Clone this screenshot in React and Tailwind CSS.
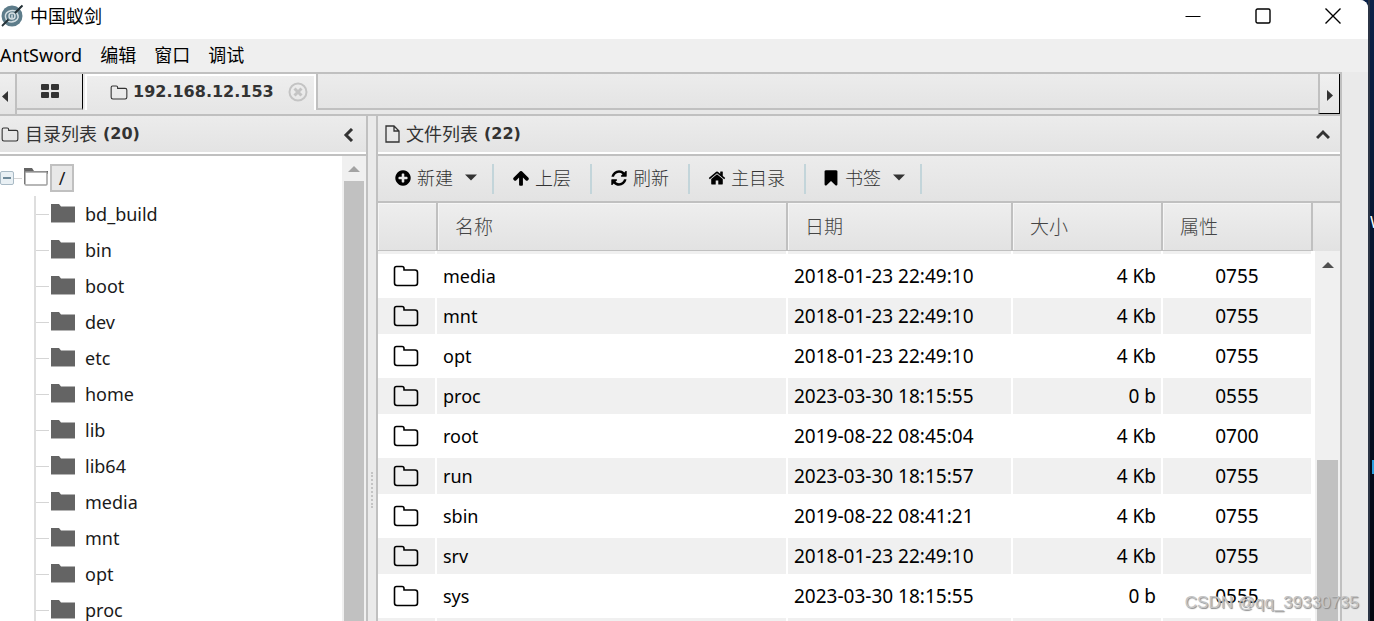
import { useState } from 'react';

const treeFolders = ['bd_build', 'bin', 'boot', 'dev', 'etc', 'home', 'lib', 'lib64', 'media', 'mnt', 'opt', 'proc'];

const files = [
  { name: 'media', date: '2018-01-23 22:49:10', size: '4 Kb', mode: '0755' },
  { name: 'mnt', date: '2018-01-23 22:49:10', size: '4 Kb', mode: '0755' },
  { name: 'opt', date: '2018-01-23 22:49:10', size: '4 Kb', mode: '0755' },
  { name: 'proc', date: '2023-03-30 18:15:55', size: '0 b', mode: '0555' },
  { name: 'root', date: '2019-08-22 08:45:04', size: '4 Kb', mode: '0700' },
  { name: 'run', date: '2023-03-30 18:15:57', size: '4 Kb', mode: '0755' },
  { name: 'sbin', date: '2019-08-22 08:41:21', size: '4 Kb', mode: '0755' },
  { name: 'srv', date: '2018-01-23 22:49:10', size: '4 Kb', mode: '0755' },
  { name: 'sys', date: '2023-03-30 18:15:55', size: '0 b', mode: '0555' },
];

function FolderOutline({ className, strokeWidth = 2 }) {
  return (
    <svg className={className} viewBox="0 0 26 22" fill="none" stroke="currentColor" strokeWidth={strokeWidth}>
      <path d="M1.500 18V3.500Q1.500 1.500 3.500 1.500H9Q11 1.500 11 3.500V5H22Q24.500 5 24.500 7.500V18Q24.500 20.500 22 20.500H4Q1.500 20.500 1.500 18Z" />
    </svg>
  );
}

function FolderSolid() {
  return (
    <svg className="h-5 w-6 shrink-0" viewBox="0 0 24 20">
      <path d="M0 0H8L10 2.500H24V18H0Z" fill="#646464" />
      <path d="M0 18.500H24" stroke="#b4b4b4" />
    </svg>
  );
}

function Glyph({ d }) {
  return (
    <svg className="h-[18px] w-[18px] -mx-px shrink-0" viewBox="0 0 1792 1792" fill="currentColor">
      <path d={d} />
    </svg>
  );
}

function Caret() {
  return (
    <svg className="h-[7px] w-3 ml-[6px]" viewBox="0 0 12 7" fill="#333">
      <path d="M0 0.500H12L6 6.500Z" />
    </svg>
  );
}

const toolbar = [
  {
    label: '新建',
    menu: true,
    d: 'M1344 960v-128q0-26-19-45t-45-19h-256v-256q0-26-19-45t-45-19h-128q-26 0-45 19t-19 45v256h-256q-26 0-45 19t-19 45v128q0 26 19 45t45 19h256v256q0 26 19 45t45 19h128q26 0 45-19t19-45v-256h256q26 0 45-19t19-45zm320-64q0 209-103 385.500t-279.500 279.500-385.500 103-385.500-103-279.500-279.500-103-385.500 103-385.500 279.500-279.500 385.500-103 385.500 103 279.500 279.500 103 385.500z',
  },
  {
    label: '上层',
    d: 'M1675 971q0 51-37 90l-75 75q-38 38-91 38-54 0-90-38l-294-293v704q0 52-37.500 84.500t-90.500 32.500h-128q-53 0-90.500-32.500t-37.500-84.500v-704l-294 293q-36 38-90 38t-90-38l-75-75q-38-38-38-90 0-53 38-91l651-651q35-37 90-37 54 0 91 37l651 651q37 39 37 91z',
  },
  {
    label: '刷新',
    d: 'M1639 1056q0 5-1 7-64 268-268 434.500t-478 166.500q-146 0-282.500-55t-243.500-157l-129 129q-19 19-45 19t-45-19-19-45v-448q0-26 19-45t45-19h448q26 0 45 19t19 45-19 45l-137 137q71 66 161 102t187 36q134 0 250-65t186-179q11-17 53-117 8-23 30-23h192q13 0 22.500 9.500t9.500 22.500zm25-800v448q0 26-19 45t-45 19h-448q-26 0-45-19t-19-45 19-45l138-138q-148-137-349-137-134 0-250 65t-186 179q-11 17-53 117-8 23-30 23h-199q-13 0-22.500-9.500t-9.500-22.500v-7q65-268 270-434.500t480-166.500q146 0 284 55.500t245 156.500l130-129q19-19 45-19t45 19 19 45z',
  },
  {
    label: '主目录',
    d: 'M1472 992v480q0 26-19 45t-45 19h-384v-384h-256v384h-384q-26 0-45-19t-19-45v-480q0-1 .5-3t.5-3l575-474 575 474q1 2 1 6zm223-69l-62 74q-8 9-21 11h-3q-13 0-21-7l-692-577-692 577q-12 8-24 7-13-2-21-11l-62-74q-8-10-7-23.500t11-21.500l719-599q32-26 76-26t76 26l244 204v-195q0-14 9-23t23-9h192q14 0 23 9t9 23v408l219 182q10 8 11 21.500t-7 23.500z',
  },
  {
    label: '书签',
    menu: true,
    d: 'M1420 128q23 0 44 9 33 13 52.500 41t19.500 62v1289q0 34-19.500 62t-52.500 41q-19 8-44 8-48 0-83-32l-441-424-441 424q-36 33-83 33-23 0-44-9-33-13-52.500-41t-19.500-62v-1289q0-34 19.500-62t52.500-41q21-9 44-9h1048z',
  },
];

function Logo() {
  return (
    <svg className="h-6 w-6" viewBox="0 0 24 24" fill="none">
      <circle cx="12" cy="12" r="10.500" fill="#5d7c8a" />
      <path d="M6.500 16Q3.500 10 8.500 7.500Q13.500 5.500 17.500 8M16.500 8.500Q20.500 14 15 17Q10.500 19 7 16.500" stroke="#d5dfe3" strokeWidth="1.500" />
      <circle cx="12" cy="12" r="3" stroke="#d5dfe3" strokeWidth="1.500" />
      <path d="M12 10.500V14" stroke="#d5dfe3" strokeWidth="1.500" />
      <path d="M2 22L8.500 15.500M15 9L22.500 1.500" stroke="#263238" strokeWidth="1.800" />
      <path d="M20.500 2L14.500 9L17 8L22.500 1.500Z" fill="#263238" />
    </svg>
  );
}

function TitleBar() {
  return (
    <header className="flex h-[39px] shrink-0 items-center justify-between rounded-tr-lg bg-white pb-2 text-black">
      <div className="flex items-center gap-[6px]">
        <Logo />
        <h1 className="text-[18px] leading-6">中国蚁剑</h1>
      </div>
      <div className="flex">
        <button type="button" aria-label="最小化" className="flex h-8 w-[70px] items-center justify-center">
          <svg className="h-4 w-4" viewBox="0 0 16 16" stroke="#000"><path d="M0.500 8.500H15.500" /></svg>
        </button>
        <button type="button" aria-label="最大化" className="flex h-8 w-[70px] items-center justify-center">
          <svg className="h-4 w-4" viewBox="0 0 16 16" fill="none" stroke="#000" strokeWidth="1.400"><rect x="1" y="1" width="14" height="14" rx="1.500" /></svg>
        </button>
        <button type="button" aria-label="关闭" className="flex h-8 w-[70px] items-center justify-center">
          <svg className="h-4 w-4" viewBox="0 0 16 16" stroke="#000" strokeWidth="1.400"><path d="M0.500 0.500L15.500 15.500M15.500 0.500L0.500 15.500" /></svg>
        </button>
      </div>
    </header>
  );
}

function TabBar() {
  return (
    <div className="flex h-11 shrink-0 border-y-2 border-r-2 border-[#c0c0c0] bg-[#e8e8e8]">
      <button type="button" aria-label="向左" className="flex w-[17px] items-center border-r-2 border-[#c0c0c0] bg-linear-to-b from-[#efefef] to-[#e4e4e4] pt-1">
        <svg className="ml-[2px] h-[11px] w-[6px]" viewBox="0 0 6 11" fill="#333"><path d="M6 0V11L0 5.500Z" /></svg>
      </button>
      <div className="mb-1 flex flex-1">
        <button type="button" aria-label="主页" className="flex w-[66px] items-center justify-center border-r border-b-2 border-r-black border-b-[#c0c0c0] bg-linear-to-b from-[#ececec] to-[#e3e3e3]">
          <svg className="h-[14px] w-[18px]" viewBox="0 0 18 14" fill="#333">
            <rect width="8" height="6" rx="1" /><rect x="10" width="8" height="6" rx="1" />
            <rect y="8" width="8" height="6" rx="1" /><rect x="10" y="8" width="8" height="6" rx="1" />
          </svg>
        </button>
        <div className="flex items-center border-x-2 border-t-2 border-x-white border-t-white bg-linear-to-b from-[#eeeeee] to-[#e6e6e6] pr-[6px] pb-[2px] pl-[23px] ml-[2px]">
          <button type="button" className="flex items-center gap-[5px] font-['DejaVu_Sans'] text-[16px] leading-6 font-bold text-[#333]">
            <FolderOutline className="h-[15px] w-[18px]" strokeWidth={1.6} />
            192.168.12.153
          </button>
          <button type="button" aria-label="关闭标签" className="ml-[14px]">
            <svg className="h-5 w-5" viewBox="0 0 20 20" fill="none" stroke="#c4c4c4">
              <circle cx="10" cy="10" r="8.500" strokeWidth="2" />
              <path d="M6.500 6.500L13.500 13.500M13.500 6.500L6.500 13.500" strokeWidth="3" />
            </svg>
          </button>
        </div>
        <div className="flex-1 border-b-2 border-l-2 border-[#c0c0c0] bg-linear-to-b from-[#ececec] to-[#e4e4e4]" />
      </div>
      <button type="button" aria-label="向右" className="flex w-[22px] items-center border-r border-b border-l-2 border-r-black border-b-black border-l-[#c0c0c0] bg-linear-to-b from-[#f0f0f0] to-[#e6e6e6] pt-1">
        <svg className="ml-[7px] h-[11px] w-[6px]" viewBox="0 0 6 11" fill="#333"><path d="M0 0V11L6 5.500Z" /></svg>
      </button>
    </div>
  );
}

function PanelHeader({ children, icon, chevron, label, onToggle }) {
  return (
    <div className="flex h-10 shrink-0 items-center justify-between border-b-2 border-[#c0c0c0] bg-linear-to-b from-[#ececec] to-[#e3e3e3] shadow-[inset_0_-2px_0_white] pr-[10px] pb-[2px] text-[#333]">
      <h2 className="flex items-center gap-[6px] text-[18px] leading-6">
        {icon}
        {children}
      </h2>
      <button type="button" aria-label={label} onClick={onToggle} className="pt-[2px]">
        <svg className="h-[14px] w-[14px]" viewBox="0 0 14 14" fill="none" stroke="#333" strokeWidth="3"><path d={chevron} /></svg>
      </button>
    </div>
  );
}

function Count({ value }) {
  return <span className="font-['DejaVu_Sans'] text-[16px] font-bold">({value})</span>;
}

function DirectoryPanel() {
  return (
    <section className="flex w-[368px] shrink-0 flex-col border-r-2 border-[#c0c0c0]">
      <PanelHeader
        label="折叠目录"
        chevron="M10 1L4 7L10 13"
        icon={<FolderOutline className="ml-px h-[15px] w-[18px]" strokeWidth={1.6} />}
      >
        目录列表 <Count value={20} />
      </PanelHeader>
      <div className="flex min-h-0 flex-1 bg-white">
        <div className="min-w-0 flex-1 overflow-hidden pt-1 text-[18px] text-[#1a1a1a]">
          <div className="flex h-9 items-center">
            <button type="button" aria-label="收起" className="flex h-[14px] w-[14px] items-center justify-center rounded-xs border border-[#a9bac5] bg-[#e9f0f4]">
              <span className="h-[2px] w-2 bg-[#6f8a9a]" />
            </button>
            <span className="h-px w-[8px] bg-[#d5d5d5]" />
            <svg className="ml-[2px] h-5 w-6" viewBox="0 0 24 20" fill="none">
              <path d="M0 0H8L10 3H24V6H0Z" fill="#646464" />
              <rect x="1" y="4" width="22" height="13" rx="1" fill="white" stroke="#a0a0a0" strokeWidth="1.500" />
              <path d="M0.500 2V16" stroke="#777" />
            </svg>
            <button type="button" className="ml-[2px] h-7 w-6 border-2 border-[#c0c0c0] bg-[#e8e8e8] leading-6">/</button>
          </div>
          <ul className="ml-[34px] border-l-2 border-[#dedede]">
            {treeFolders.map((name) => (
              <li key={name} className="flex h-9 items-center">
                <span className="mr-[2px] h-px w-[13px] bg-[#d5d5d5]" />
                <FolderSolid />
                <button type="button" className="ml-[10px] leading-6">{name}</button>
              </li>
            ))}
          </ul>
        </div>
        <div className="w-6 shrink-0 bg-[#f0f0f0] px-[2px]">
          <div className="flex h-[25px] items-center justify-center">
            <svg className="h-[6px] w-3" viewBox="0 0 12 6" fill="#a3a3a3"><path d="M0 6H12L6 0Z" /></svg>
          </div>
          <div className="h-full bg-[#c1c1c1]" />
        </div>
      </div>
    </section>
  );
}

function Columns() {
  return (
    <colgroup>
      <col className="w-[59px]" />
      <col />
      <col className="w-[225px]" />
      <col className="w-[150px]" />
      <col className="w-[150px]" />
    </colgroup>
  );
}

function FilePanel() {
  const [selected, setSelected] = useState(null);

  return (
    <section className="flex min-w-0 flex-1 flex-col border-x-2 border-[#c0c0c0]">
      <PanelHeader
        label="折叠文件列表"
        chevron="M1 10L7 4L13 10"
        icon={
          <svg className="ml-[7px] h-[18px] w-[15px]" viewBox="0 0 15 18" fill="none" stroke="currentColor" strokeWidth="1.300">
            <path d="M1 1H9L14 6V17H1ZM9 1V6H14" />
          </svg>
        }
      >
        文件列表 <Count value={22} />
      </PanelHeader>

      <div className="flex h-[47px] shrink-0 items-center border-b-2 border-[#c0c0c0] bg-linear-to-b from-[#ececec] to-[#e3e3e3]">
        {toolbar.map((item) => (
          <button
            key={item.label}
            type="button"
            className={'flex h-[30px] items-center gap-[6px] border-r-2 border-[#c3d5da] pb-[2px] text-[18px] leading-6 text-black ' + (item.menu ? 'pr-[15px] pl-[17px]' : 'pr-[19px] pl-[19px]')}
          >
            <Glyph d={item.d} />
            <span className="font-light text-[#333]">{item.label}</span>
            {item.menu && <Caret />}
          </button>
        ))}
      </div>

      <div className="flex h-12 shrink-0 bg-linear-to-b from-[#eeeeee] to-[#e2e2e2]">
        <table className="flex-1 table-fixed text-left text-[19px] text-[#444]">
          <Columns />
          <thead>
            <tr className="h-12">
              {['', '名称', '日期', '大小', '属性'].map((title, i) => (
                <th key={i} className="border-r-2 border-b-2 border-[#c0c0c0] pt-[2px] pl-[17px] font-light shadow-[inset_1px_1px_0_#f6f6f6]">{title}</th>
              ))}
            </tr>
          </thead>
        </table>
        <div className="w-[27px]" />
      </div>

      <div className="flex min-h-0 flex-1 overflow-hidden bg-white">
        <div className="min-w-0 flex-1">
          <table className="w-full table-fixed border-separate border-spacing-0 text-[19px] leading-6 text-black">
            <Columns />
            <tbody>
              <tr className="h-[5px]" aria-hidden="true">
                {[0, 1, 2, 3, 4].map((i) => (
                  <td key={i} className="border-r-2 border-b-2 border-white bg-[#f0f0f0] bg-clip-padding" />
                ))}
              </tr>
              {[...files, null].map((file, i) => (
                <tr
                  key={i}
                  onClick={() => setSelected(i)}
                  aria-selected={selected === i}
                  className={'h-10 *:border-y-2 *:border-r-2 *:border-white ' + (i % 2 ? 'bg-[#f0f0f0]' : 'bg-white')}
                >
                  <td className="pl-[15px]">{file && <FolderOutline className="h-[22px] w-[26px]" strokeWidth={1.6} />}</td>
                  <td className="pl-[6px] text-[18px]">{file?.name}</td>
                  <td className="pl-[6px]">{file?.date}</td>
                  <td className="pr-[5px] text-right">{file?.size}</td>
                  <td className="text-center">{file?.mode}</td>
                </tr>
              ))}
            </tbody>
          </table>
        </div>
        <div className="ml-[2px] w-[25px] shrink-0 bg-[#f0f0f0] pr-[2px] pl-[2px]">
          <div className="flex h-[27px] items-center justify-center">
            <svg className="h-[6px] w-3" viewBox="0 0 12 6" fill="#505050"><path d="M0 6H12L6 0Z" /></svg>
          </div>
          <div className="mt-[182px] h-full bg-[#c1c1c1]" />
        </div>
      </div>
    </section>
  );
}

export default function App() {
  return (
    <div className="relative flex h-screen overflow-hidden bg-linear-to-b from-[#0a2148] to-[#03060f] font-['Noto_Sans','Noto_Sans_CJK_SC',sans-serif]">
      <div className="flex min-w-0 flex-1 flex-col rounded-tr-lg bg-[#eaeaea]">
        <TitleBar />
        <nav className="flex h-[33px] shrink-0 items-center gap-[18px] bg-[#efefef] pb-[2px] text-[18px] leading-6 text-black">
          {['AntSword', '编辑', '窗口', '调试'].map((item) => (
            <button key={item} type="button">{item}</button>
          ))}
        </nav>
        <main className="mr-[26px] flex min-h-0 flex-1 flex-col">
          <TabBar />
          <div className="flex min-h-0 flex-1">
            <DirectoryPanel />
            <div className="flex w-2 shrink-0 items-center justify-center bg-[#eaeaea]">
              <div className="mt-[242px] h-9 border-l-2 border-dotted border-[#c4c4c4]" />
            </div>
            <FilePanel />
          </div>
        </main>
      </div>
      {/* sliver of the desktop behind the window */}
      <div className="w-[6px] shrink-0 overflow-hidden border-l-2 border-[#2b3445] text-[16px] leading-6 text-white">
        <div className="mt-[210px]">W</div>
        <div className="mt-[226px] ml-[2px] h-[14px] bg-[#2b9fe0]" />
      </div>
      <div className="absolute right-[15px] bottom-[6px] font-['Liberation_Sans'] text-[17px] leading-6 text-[#c4c4c4] [text-shadow:1px_1px_1px_#888]">
        CSDN @qq_39330735
      </div>
    </div>
  );
}
